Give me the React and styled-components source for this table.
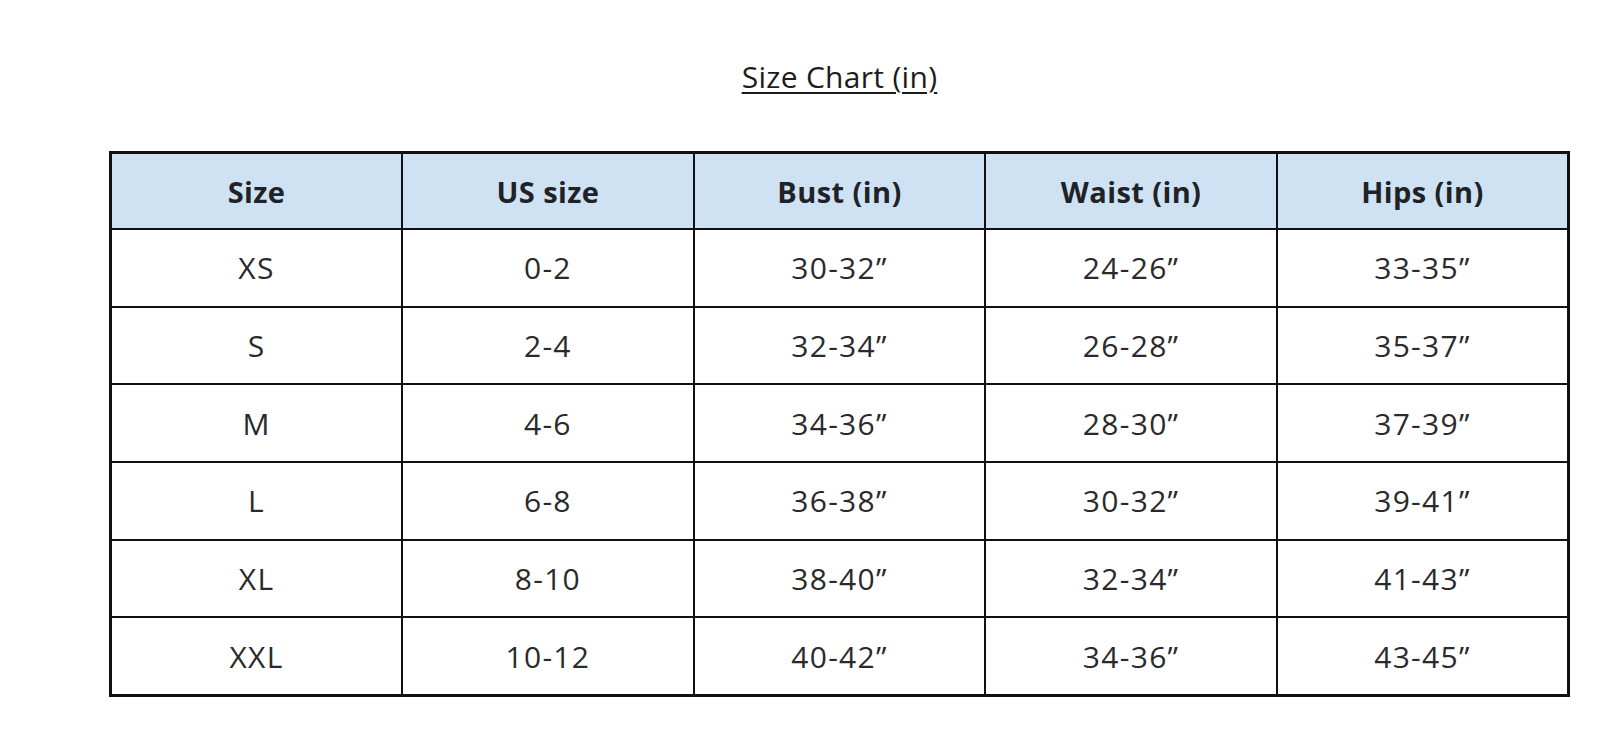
import React from 'react';
import styled, { createGlobalStyle } from 'styled-components';

const GlobalStyle = createGlobalStyle`
  body {
    margin: 0;
    background: #ffffff;
    font-family: 'Open Sans', 'Noto Sans', sans-serif;
    color: #222222;
  }
`;

const Page = styled.div`
  width: 1606px;
  height: 730px;
  padding: 60px 0 0 109px;
  box-sizing: border-box;
`;

const Title = styled.h1`
  width: 1461px;
  margin: 0 0 57px;
  text-align: center;
  font-size: 30px;
  font-weight: 400;
  line-height: 34px;
  letter-spacing: 0.3px;
  color: #1c1c1c;
  span {
    text-decoration: underline;
    text-underline-offset: 4px;
    text-decoration-thickness: 2px;
  }
`;

const Table = styled.table`
  width: 1461px;
  border-collapse: collapse;
  table-layout: fixed;
  border: 3px solid #111;
`;

const HeadCell = styled.th`
  height: 72px;
  background: #cfe2f3;
  border: 2.5px solid #111;
  font-size: 29px;
  font-weight: 700;
  letter-spacing: 0.4px;
  color: #1f2226;
  text-align: center;
`;

const Cell = styled.td`
  height: 73.7px;
  border: 2.5px solid #111;
  font-size: 30px;
  font-weight: 400;
  letter-spacing: 1.3px;
  color: #2a2a2a;
  text-align: center;
`;

const headers = ['Size', 'US size', 'Bust (in)', 'Waist (in)', 'Hips (in)'];

const rows = [
  ['XS', '0-2', '30-32”', '24-26”', '33-35”'],
  ['S', '2-4', '32-34”', '26-28”', '35-37”'],
  ['M', '4-6', '34-36”', '28-30”', '37-39”'],
  ['L', '6-8', '36-38”', '30-32”', '39-41”'],
  ['XL', '8-10', '38-40”', '32-34”', '41-43”'],
  ['XXL', '10-12', '40-42”', '34-36”', '43-45”'],
];

export default function App() {
  return (
    <>
      <GlobalStyle />
      <Page>
        <Title>
          <span>Size Chart (in)</span>
        </Title>
        <Table>
          <thead>
            <tr>
              {headers.map((h) => (
                <HeadCell key={h}>{h}</HeadCell>
              ))}
            </tr>
          </thead>
          <tbody>
            {rows.map((r) => (
              <tr key={r[0]}>
                {r.map((c, i) => (
                  <Cell key={i}>{c}</Cell>
                ))}
              </tr>
            ))}
          </tbody>
        </Table>
      </Page>
    </>
  );
}
